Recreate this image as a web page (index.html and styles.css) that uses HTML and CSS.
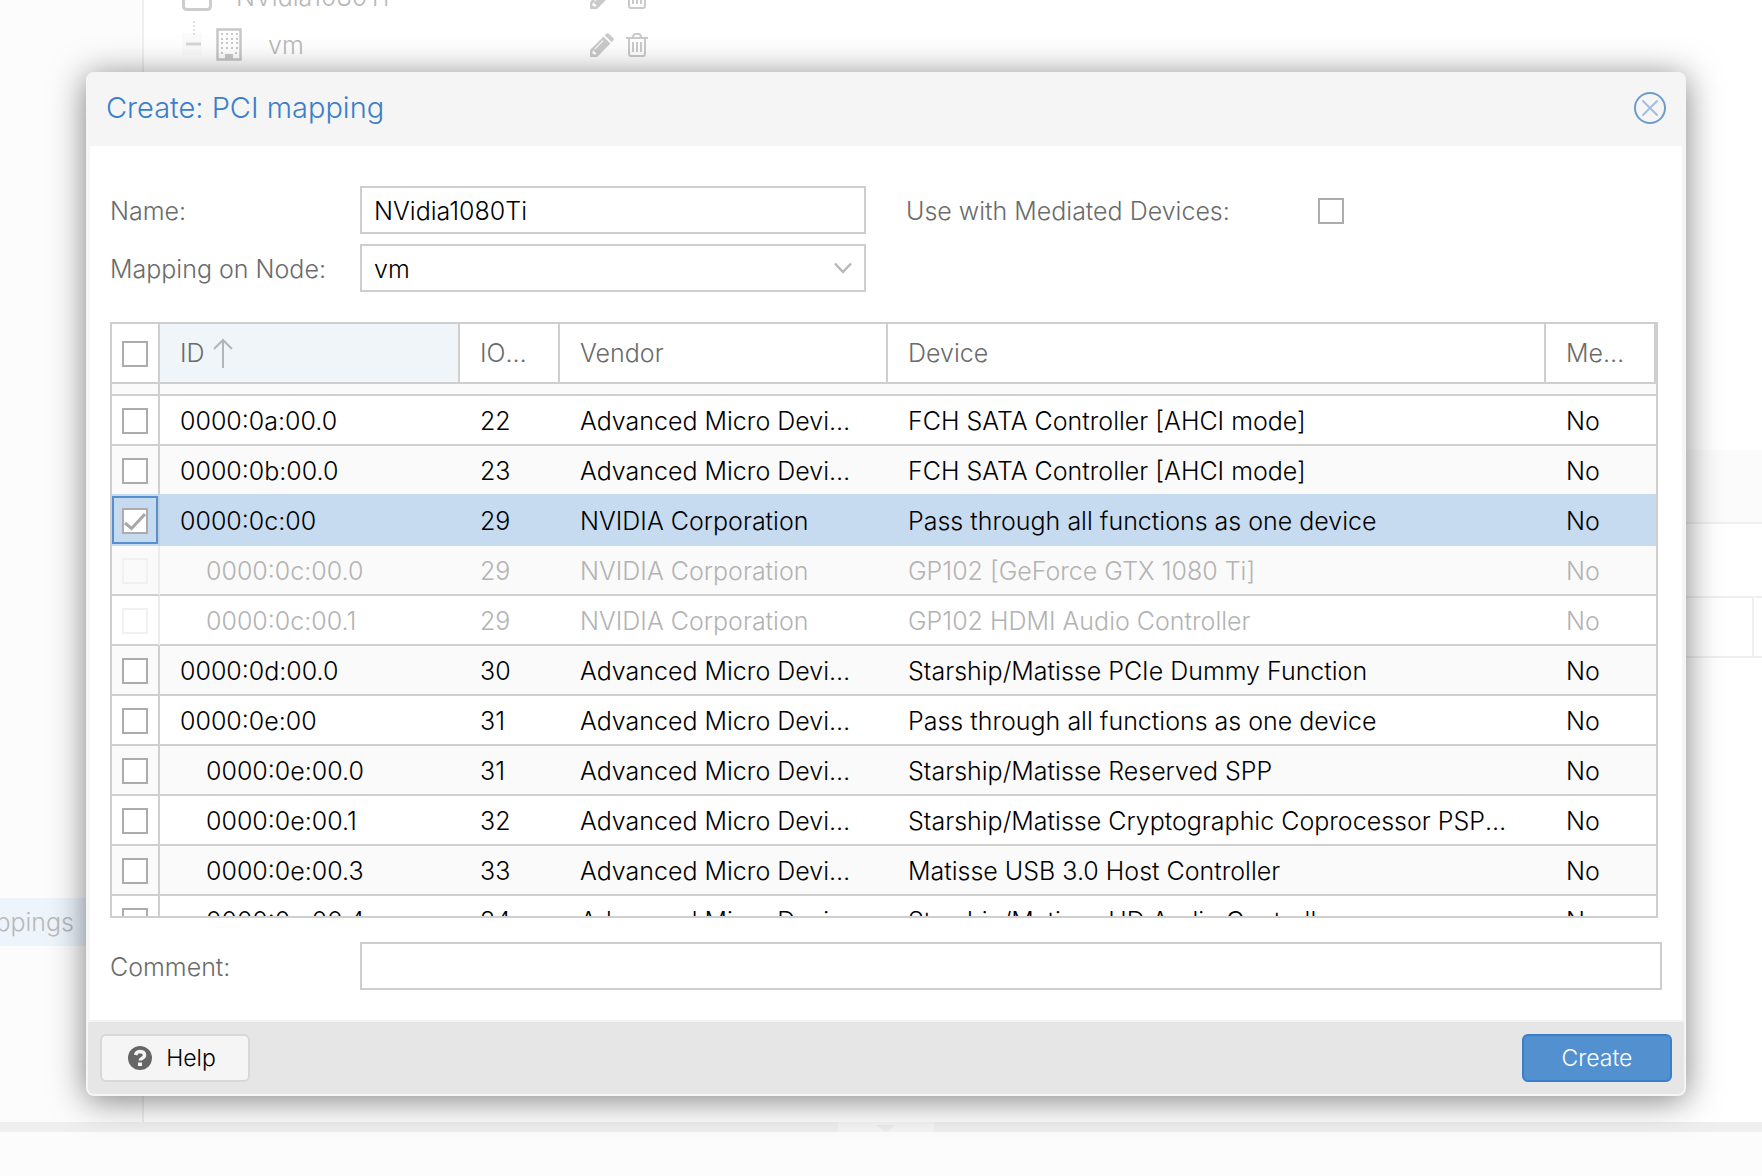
FILE: index.html
```
<!DOCTYPE html>
<html lang="en">
<head>
<meta charset="utf-8">
<title>Create: PCI mapping</title>
<link rel="stylesheet" href="styles.css">
</head>
<body>
<svg class="defs" aria-hidden="true">
  <symbol id="pencil" viewBox="0 0 24 24">
    <path fill-rule="evenodd" d="M0 24V17L13.500 3.500 20.500 10.500 7 24ZM2.500 18.500V21H4.500V22.500L6.500 20.500 3.500 17.500ZM5 16.500L13.500 8 12.800 7.300 4.300 15.800Z"/>
    <path d="M14.700 2.300L16.300 .700Q17.600 -.400 18.900 .700L23.200 5Q24.400 6.300 23.200 7.600L21.700 9.200Z"/>
  </symbol>
  <symbol id="trash" viewBox="0 0 22 24">
    <path fill="none" stroke="currentColor" stroke-width="2" d="M0 5H22M3 5V20.500Q3 23 5 23H17Q19 23 19 20.500V5M6.500 5L8 1.500Q8.200 1 9 1H13Q13.800 1 14 1.500L15.500 5M7 9V19M11 9V19M15 9V19"/>
  </symbol>
</svg>

<div class="app">
  <div class="workspace">
    <nav class="sidebar">
      <a class="nav-item" href="#mappings">Mappings</a>
    </nav>
    <main class="content">
      <div class="tree">
        <div class="tree-row">
          <div class="tree-name">
            <svg class="folder" viewBox="0 0 30 28"><path d="M1.500 5V23Q1.500 26.500 5 26.500H25Q28.500 26.500 28.500 23V8Q28.500 5 25 5H15L13 2H5Q1.500 2 1.500 5Z" fill="none" stroke="currentColor" stroke-width="3"/></svg>
            <span>NVidia1080Ti</span>
          </div>
          <div class="actions">
            <button type="button" aria-label="Edit"><svg class="act"><use href="#pencil"/></svg></button>
            <button type="button" aria-label="Remove"><svg class="act"><use href="#trash"/></svg></button>
          </div>
        </div>
        <div class="tree-row child">
          <div class="tree-name">
            <svg class="expander" viewBox="0 0 20 48"><path class="box" d="M0 12H20V34H0Z"/><path d="M12 0V14" stroke-dasharray="2 2" stroke-width="2" class="dots"/><path d="M4 23H19" stroke-width="3" class="dash"/></svg>
            <svg class="building" viewBox="0 0 26 34"><path d="M1.500 1.500H24.500V31.500H1.500Z" fill="none" stroke="currentColor" stroke-width="2.500"/><path d="M9 26H17V32H9Z" fill="currentColor"/><path d="M5 6H22M5 11H22M5 15H22M5 20H22M5 25H7M19 25H22" stroke="currentColor" stroke-width="2" stroke-dasharray="2 3"/></svg>
            <span>vm</span>
          </div>
          <div class="actions">
            <button type="button" aria-label="Edit"><svg class="act"><use href="#pencil"/></svg></button>
            <button type="button" aria-label="Remove"><svg class="act"><use href="#trash"/></svg></button>
          </div>
        </div>
      </div>
      <div class="panel-head"></div>
      <div class="panel-bar"></div>
      <div class="panel-columns"><div></div></div>
    </main>
  </div>
  <div class="splitter"><button type="button" aria-label="Collapse"><svg viewBox="0 0 20 7"><path d="M0 0H20L10 7Z"/></svg></button></div>
  <div class="log"></div>
</div>

<div class="overlay">
  <form class="dialog" role="dialog" aria-labelledby="title">
    <header class="dialog-head">
      <h1 id="title">Create: PCI mapping</h1>
      <button type="button" class="close" aria-label="Close">
        <svg viewBox="0 0 32 32" fill="none"><circle cx="16" cy="16" r="15" stroke="#6e9bcd" stroke-width="2"/><path d="M9 9L23 23M23 9L9 23" stroke="#a3bde4" stroke-width="2" stroke-linecap="round"/></svg>
      </button>
    </header>
    <div class="dialog-body">
      <div class="fields">
        <div class="field"><label for="name">Name:</label><input class="box-input" id="name" type="text" value="NVidia1080Ti"></div>
        <div class="field wide"><label for="mdev">Use with Mediated Devices:</label><input class="check" id="mdev" type="checkbox"></div>
        <div class="field"><label for="node">Mapping on Node:</label>
          <div class="select"><select class="box-input" id="node"><option>vm</option></select><svg viewBox="0 0 18 12"><path d="M1 1.500L9 10 17 1.500" fill="none" stroke="#b8b8b8" stroke-width="2.500"/></svg></div>
        </div>
      </div>
      <div class="grid" id="grid">
        <table>
          <colgroup><col class="c-check"><col class="c-id"><col class="c-group"><col class="c-vendor"><col><col class="c-med"></colgroup>
          <thead>
            <tr>
              <th class="cc"><input class="check" type="checkbox" aria-label="Select all"></th>
              <th class="sorted"><span>ID<svg viewBox="0 0 20 30"><path d="M10 30V2M1 11L10 2 19 11" fill="none" stroke="#b3b5b7" stroke-width="2"/></svg></span></th>
              <th>IOMMU-Group</th><th>Vendor</th><th>Device</th><th>Mediated Devices</th>
            </tr>
          </thead>
          <tbody>
            <tr><td class="cc"><input class="check" type="checkbox" aria-label="Select device"></td><td></td><td></td><td></td><td></td><td></td></tr>
            <tr><td class="cc"><input class="check" type="checkbox" aria-label="0000:0a:00.0"></td><td>0000:0a:00.0</td><td>22</td><td>Advanced Micro Devices, Inc.</td><td>FCH SATA Controller [AHCI mode]</td><td>No</td></tr>
            <tr class="before"><td class="cc"><input class="check" type="checkbox" aria-label="0000:0b:00.0"></td><td>0000:0b:00.0</td><td>23</td><td>Advanced Micro Devices, Inc.</td><td>FCH SATA Controller [AHCI mode]</td><td>No</td></tr>
            <tr class="selected"><td class="cc"><input class="check" type="checkbox" aria-label="0000:0c:00" checked></td><td>0000:0c:00</td><td>29</td><td>NVIDIA Corporation</td><td>Pass through all functions as one device</td><td>No</td></tr>
            <tr class="off"><td class="cc"><input class="check" type="checkbox" aria-label="0000:0c:00.0" disabled></td><td class="sub">0000:0c:00.0</td><td>29</td><td>NVIDIA Corporation</td><td>GP102 [GeForce GTX 1080 Ti]</td><td>No</td></tr>
            <tr class="off"><td class="cc"><input class="check" type="checkbox" aria-label="0000:0c:00.1" disabled></td><td class="sub">0000:0c:00.1</td><td>29</td><td>NVIDIA Corporation</td><td>GP102 HDMI Audio Controller</td><td>No</td></tr>
            <tr><td class="cc"><input class="check" type="checkbox" aria-label="0000:0d:00.0"></td><td>0000:0d:00.0</td><td>30</td><td>Advanced Micro Devices, Inc.</td><td>Starship/Matisse PCIe Dummy Function</td><td>No</td></tr>
            <tr><td class="cc"><input class="check" type="checkbox" aria-label="0000:0e:00"></td><td>0000:0e:00</td><td>31</td><td>Advanced Micro Devices, Inc.</td><td>Pass through all functions as one device</td><td>No</td></tr>
            <tr><td class="cc"><input class="check" type="checkbox" aria-label="0000:0e:00.0"></td><td class="sub">0000:0e:00.0</td><td>31</td><td>Advanced Micro Devices, Inc.</td><td>Starship/Matisse Reserved SPP</td><td>No</td></tr>
            <tr><td class="cc"><input class="check" type="checkbox" aria-label="0000:0e:00.1"></td><td class="sub">0000:0e:00.1</td><td>32</td><td>Advanced Micro Devices, Inc.</td><td>Starship/Matisse Cryptographic Coprocessor PSPCPP</td><td>No</td></tr>
            <tr><td class="cc"><input class="check" type="checkbox" aria-label="0000:0e:00.3"></td><td class="sub">0000:0e:00.3</td><td>33</td><td>Advanced Micro Devices, Inc.</td><td>Matisse USB 3.0 Host Controller</td><td>No</td></tr>
            <tr><td class="cc"><input class="check" type="checkbox" aria-label="0000:0e:00.4"></td><td class="sub">0000:0e:00.4</td><td>34</td><td>Advanced Micro Devices, Inc.</td><td>Starship/Matisse HD Audio Controller</td><td>No</td></tr>
          </tbody>
        </table>
      </div>
      <div class="field"><label for="comment">Comment:</label><input class="box-input" id="comment" type="text"></div>
    </div>
    <footer class="dialog-foot">
      <button type="button" class="btn help"><svg viewBox="0 0 24 24"><circle cx="12" cy="12" r="12" fill="#666"/><path d="M7.500 9Q8.500 5.500 12.200 5.500Q16.500 5.700 16.500 9Q16.500 11 14.200 12.200Q12.200 13.200 12.200 14.500" fill="none" stroke="#f5f5f5" stroke-width="3.500"/><path d="M10 16.500H14V20H10Z" fill="#f5f5f5"/></svg>Help</button>
      <button type="submit" class="btn primary">Create</button>
    </footer>
  </form>
</div>
<script src="grid.js"></script>
</body>
</html>
```
FILE: styles.css
```
* { box-sizing: border-box; }

body {
  margin: 0;
  font: 300 25px/32px Inter, "Helvetica Neue", "Liberation Sans", sans-serif;
  color: #000;
  background: #fff;
}

button { font: inherit; padding: 0; border: 0; background: none; color: inherit; }
svg { display: block; flex: none; }
.defs { width: 0; height: 0; position: absolute; }

/* Masked application behind the dialog */
.app {
  display: flex;
  flex-direction: column;
  height: 100vh;
  overflow: hidden;
}
.workspace { display: flex; flex: 1; min-height: 0; }
.sidebar {
  display: flex;
  flex-direction: column;
  justify-content: flex-end;
  flex: 0 0 144px;
  padding-bottom: 176px;
  border-right: 2px solid #efefef;
  background: #fcfcfc;
  overflow: hidden;
}
.nav-item {
  display: flex;
  justify-content: flex-end;
  padding: 8px 68px 8px 0;
  background: #edf4fc;
  color: #b9b9b9;
  text-decoration: none;
}
.content { flex: 1; min-width: 0; overflow: hidden; }
.tree { height: 450px; color: #b8b8b8; overflow: hidden; }
.tree-row { display: flex; align-items: center; height: 48px; }
.tree-row:first-child { margin-top: -27px; }
.tree-name { display: flex; align-items: center; flex: 0 0 446px; padding-left: 38px; }
.folder { width: 30px; height: 28px; margin-right: 24px; color: #cdcdcd; }
.expander { width: 20px; height: 48px; margin-right: 14px; fill: none; }
.expander .box { fill: #fbfbfb; }
.expander .dots { stroke: #e2e2e2; }
.expander .dash { stroke: #d6d6d6; }
.building { width: 26px; height: 34px; margin-right: 26px; color: #c8c8c8; }
.actions { display: flex; gap: 11px; color: #cacaca; fill: currentColor; }
.act { width: 24px; height: 24px; }
.panel-head { height: 74px; background: #fbfbfb; border-bottom: 2px solid #f0f0f0; }
.panel-bar { height: 74px; border-bottom: 2px solid #f0f0f0; }
.panel-columns { height: 60px; padding-right: 8px; border-bottom: 2px solid #f0f0f0; }
.panel-columns div { height: 100%; border-right: 2px solid #f0f0f0; }
.splitter {
  display: flex;
  justify-content: center;
  flex: 0 0 10px;
  padding-left: 10px;
  background: #efefef;
}
.splitter button {
  display: flex;
  justify-content: center;
  align-items: flex-end;
  width: 96px;
  background: #f5f5f5;
}
.splitter svg { width: 20px; height: 7px; fill: #ececec; }
.log { flex: 0 0 44px; background: #fcfcfc; }

/* Dialog */
.overlay {
  position: absolute;
  inset: 0;
  display: flex;
  padding: 72px 76px 80px 86px;
}
.dialog {
  display: flex;
  flex-direction: column;
  flex: 1;
  min-width: 0;
  border: 2px solid #f5f5f5;
  border-radius: 8px;
  background: #f5f5f5;
  box-shadow: 0 4px 34px rgba(0, 0, 0, .5);
}
.dialog-head {
  display: flex;
  align-items: center;
  justify-content: space-between;
  height: 72px;
  padding: 0 18px 4px;
}
.dialog-head h1 { margin: 0; font-size: 29px; font-weight: 300; color: #3a7fcb; }
.close svg { width: 32px; height: 32px; }
.dialog-body {
  display: flex;
  flex-direction: column;
  flex: 1;
  min-height: 0;
  margin: 0 2px;
  padding: 40px 20px 30px;
  background: #fff;
}
.fields { display: grid; grid-template-columns: 1fr 1fr; gap: 10px 40px; }
.field { display: flex; align-items: center; height: 48px; color: #6b6b6b; }
.field label { flex: 0 0 250px; padding-top: 2px; }
.field.wide label { flex-basis: 412px; }
.box-input {
  width: 100%;
  height: 48px;
  padding: 2px 12px 0;
  border: 2px solid #cecece;
  border-radius: 0;
  outline: 0;
  background: #fff;
  color: #000;
  font: inherit;
  appearance: none;
}
.field > .box-input, .select { flex: 1; min-width: 0; }
.select { display: grid; align-items: center; }
.select > * { grid-area: 1 / 1; }
.select svg { width: 18px; height: 12px; margin-right: 14px; justify-self: end; pointer-events: none; }

.check {
  display: block;
  width: 26px;
  height: 26px;
  margin: 0;
  border: 2px solid #acacac;
  background: #fff;
  appearance: none;
}
.field .check { margin-top: 2px; }
.check:checked {
  background: #fff url("data:image/svg+xml,%3Csvg xmlns='http://www.w3.org/2000/svg' viewBox='0 0 22 22'%3E%3Cpath d='M1 13L7.500 18.500 21 4' fill='none' stroke='%23a8a8a8' stroke-width='3'/%3E%3C/svg%3E") center / 22px 22px no-repeat;
}

/* Device grid */
.grid {
  flex: 1;
  min-height: 0;
  margin: 30px 4px 24px 0;
  border: 2px solid #cfcfcf;
  overflow: auto;
  scrollbar-width: none;
}
table { width: 100%; table-layout: fixed; border-spacing: 0; }
.c-check { width: 48px; }
.c-id { width: 300px; }
.c-group { width: 100px; }
.c-vendor { width: 328px; }
.c-med { width: 110px; }
th, td {
  padding: 2px 26px 0 20px;
  border-bottom: 2px solid #cfcfcf;
  text-align: left;
  font-weight: 300;
  white-space: nowrap;
  overflow: hidden;
  text-overflow: ellipsis;
}
th {
  position: sticky;
  top: 0;
  z-index: 1;
  height: 60px;
  padding: 0 20px;
  border-right: 2px solid #cfcfcf;
  background: #fff;
  color: #6b6b6b;
}
th.sorted { background: #f0f5fa; }
.sorted span { display: flex; align-items: center; gap: 8px; }
.sorted svg { width: 20px; height: 30px; }
td { height: 50px; }
.cc { padding: 2px 10px 0; border-right: 2px solid #cfcfcf; }
.sub { padding-left: 46px; }
tbody tr { background: #fff; }
tbody tr:nth-child(odd) { background: #fafafa; }
.before td { border-bottom-color: #c6dbf0; }
tbody .selected { background: #c6dbf0; }
.selected td { border-color: #c6dbf0; }
.selected .cc { border-right-color: #c3cfdb; box-shadow: inset 0 0 0 2px #5490cf; }
.off td { color: #b3b3b3; }
.off .cc { border-right-color: #ececec; }
.off .check { border-color: #f1f1f1; background: transparent; }

.dialog-foot {
  display: flex;
  align-items: center;
  justify-content: space-between;
  height: 74px;
  padding: 0 12px;
  border-top: 2px solid #f3f3f3;
  border-radius: 0 0 6px 6px;
  background: #e6e6e6;
}
.btn {
  display: flex;
  align-items: center;
  justify-content: center;
  gap: 14px;
  width: 150px;
  height: 48px;
  border: 2px solid #d8d8d8;
  border-radius: 6px;
  background: #f5f5f5;
  font-size: 23px;
}
.btn svg { width: 24px; height: 24px; }
.btn.help { padding-right: 6px; }
.btn.primary { border-color: #3a7fcb; background: #5290d0; color: #fff; }
```
FILE: grid.js
```
// Start the device list at the rows around the selected device.
document.getElementById('grid').scrollTop = 38;
```
